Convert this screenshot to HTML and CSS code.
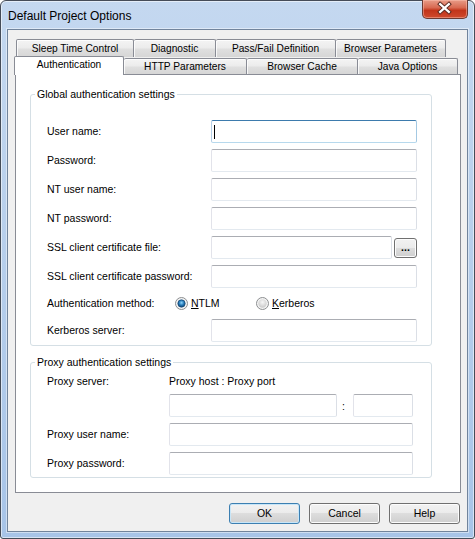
FILE: index.html
```html
<!DOCTYPE html>
<html>
<head>
<meta charset="utf-8">
<title>Default Project Options</title>
<link rel="stylesheet" href="styles.css">
</head>
<body>
<div class="window">
  <div class="titlebar">
    <span class="title">Default Project Options</span>
    <div class="close">
      <svg width="46" height="19" viewBox="0 0 46 19">
        <path d="M18.5 5 L27.5 13 M27.5 5 L18.5 13" stroke="#5a2a22" stroke-width="4.2" stroke-linecap="square" fill="none"/>
        <path d="M18.5 5 L27.5 13 M27.5 5 L18.5 13" stroke="#ffffff" stroke-width="2.2" stroke-linecap="square" fill="none"/>
      </svg>
    </div>
  </div>
  <div class="client">
    <div class="tabs">
      <div class="tabrow back">
        <div class="tab first t1">Sleep Time Control</div>
        <div class="tab t2">Diagnostic</div>
        <div class="tab t3">Pass/Fail Definition</div>
        <div class="tab t4">Browser Parameters</div>
      </div>
      <div class="tabrow front">
        <div class="tab selected u1">Authentication</div>
        <div class="tab u2">HTTP Parameters</div>
        <div class="tab u3">Browser Cache</div>
        <div class="tab u4">Java Options</div>
      </div>
    </div>
    <div class="panel">
      <fieldset class="group g1">
        <legend>Global authentication settings</legend>
        <div class="form form1">
          <span class="lbl">User name:</span>
          <div class="field focus"><span class="caret"></span></div>
          <span class="lbl">Password:</span>
          <div class="field"></div>
          <span class="lbl">NT user name:</span>
          <div class="field"></div>
          <span class="lbl">NT password:</span>
          <div class="field"></div>
          <span class="lbl">SSL client certificate file:</span>
          <div class="filepick">
            <div class="field file"></div>
            <div class="btn browse">...</div>
          </div>
          <span class="lbl">SSL client certificate password:</span>
          <div class="field"></div>
          <div class="radiorow">
            <span class="lbl method">Authentication method:</span>
            <span class="radio r-ntlm">
              <svg width="13" height="13" viewBox="0 0 13 13">
                <defs>
                  <radialGradient id="rb" cx="50%" cy="40%" r="60%">
                    <stop offset="0" stop-color="#8fd6fb"/>
                    <stop offset="0.55" stop-color="#2479b8"/>
                    <stop offset="1" stop-color="#10416d"/>
                  </radialGradient>
                </defs>
                <circle cx="6.5" cy="6.5" r="6" fill="#f4f4f4" stroke="#8c8e90"/>
                <circle cx="6.5" cy="6.5" r="3.7" fill="url(#rb)" stroke="#1b4a74" stroke-width="0.7"/>
              </svg>
              <span><u>N</u>TLM</span>
            </span>
            <span class="radio">
              <svg width="13" height="13" viewBox="0 0 13 13">
                <defs>
                  <radialGradient id="rg" cx="50%" cy="35%" r="65%">
                    <stop offset="0" stop-color="#f7f7f7"/>
                    <stop offset="1" stop-color="#c9c9c9"/>
                  </radialGradient>
                </defs>
                <circle cx="6.5" cy="6.5" r="6" fill="#f4f4f4" stroke="#8c8e90"/>
                <circle cx="6.5" cy="6.5" r="4.2" fill="url(#rg)"/>
              </svg>
              <span><u>K</u>erberos</span>
            </span>
          </div>
          <span class="lbl">Kerberos server:</span>
          <div class="field"></div>
        </div>
      </fieldset>
      <fieldset class="group g2">
        <legend>Proxy authentication settings</legend>
        <div class="form form2">
          <span class="lbl">Proxy server:</span>
          <span class="lbl">Proxy host : Proxy port</span>
          <div class="hostport">
            <div class="field host"></div>
            <span class="colon">:</span>
            <div class="field port"></div>
          </div>
          <span class="lbl">Proxy user name:</span>
          <div class="field"></div>
          <span class="lbl">Proxy password:</span>
          <div class="field"></div>
        </div>
      </fieldset>
    </div>
    <div class="buttons">
      <div class="btn push default">OK</div>
      <div class="btn push">Cancel</div>
      <div class="btn push">Help</div>
    </div>
  </div>
</div>
</body>
</html>
```

FILE: styles.css
```css
html, body {
  margin: 0;
  padding: 0;
  background: #ffffff;
}

body {
  font-family: "Liberation Sans", Arial, sans-serif;
  font-size: 10.5px;
  color: #000;
}

.window {
  box-sizing: border-box;
  width: 475px;
  height: 539px;
  border: 1px solid #454c58;
  border-radius: 6px 6px 3px 3px;
  background: linear-gradient(to bottom, #c4d8f0 0%, #b9d0ec 40%, #a7c4e8 100%);
  padding: 0 6px 6px 6px;
  display: flex;
  flex-direction: column;
  box-shadow: inset 0 0 0 1px rgba(255, 255, 255, 0.55);
}

.titlebar {
  height: 28px;
  display: flex;
  align-items: center;
}

.title {
  font-family: "Liberation Sans", Arial, sans-serif;
  font-size: 12px;
  padding-left: 1px;
  color: #000;
  line-height: 14px;
  margin-top: 1px;
}

.close {
  margin-left: auto;
  align-self: flex-start;
  margin-top: -1px;
  width: 46px;
  height: 19px;
  box-sizing: border-box;
  border: 1px solid #6b3a33;
  border-top: none;
  border-radius: 0 0 5px 5px;
  background: linear-gradient(to bottom, #e89c88 0%, #d86a52 42%, #c2341a 58%, #cf4a2e 100%);
  box-shadow: inset 0 0 0 1px rgba(255, 200, 185, 0.45);
  display: flex;
}

.close svg {
  display: block;
  margin: -1px 0 0 -1px;
}

.client {
  flex: 1;
  border: 1px solid #71849c;
  background: #f0f0f0;
  padding: 9px 6px 0 7px;
  box-shadow: 0 0 0 1px rgba(255, 255, 255, 0.45);
}

/* Tabs */
.tabs {
  width: 446px;
}

.tabrow {
  display: flex;
  align-items: flex-end;
}

.tabrow.back {
  height: 18px;
  padding-left: 1px;
}

.tabrow.front {
  height: 17px;
}

.tab {
  box-sizing: border-box;
  border-top: 1px solid #898c95;
  border-right: 1px solid #898c95;
  border-radius: 2px 2px 0 0;
  background: linear-gradient(to bottom, #f4f4f4 0%, #ececec 45%, #dfdfdf 55%, #d6d6d6 100%);
  box-shadow: inset 1px 1px 0 rgba(255, 255, 255, 0.8);
  display: flex;
  align-items: center;
  justify-content: center;
  font-size: 10.2px;
  line-height: 12px;
  white-space: nowrap;
}

.tab.first {
  border-left: 1px solid #898c95;
}

.tabrow.back .tab {
  height: 18px;
}

.tabrow.front .tab {
  height: 16px;
}

.tabrow.front .tab.selected {
  height: 19px;
  margin-left: -1px;
  margin-bottom: -1px;
  border-left: 1px solid #898c95;
  background: #ffffff;
  box-shadow: none;
  position: relative;
  z-index: 1;
  padding-bottom: 2px;
}

.t1 { width: 118px; }
.t2 { width: 82px; }
.t3 { width: 120px; }
.t4 { width: 110px; }
.u1 { width: 110px; }
.u2 { width: 123px; }
.u3 { width: 111px; }
.u4 { width: 100px; }

/* Panel */
.panel {
  box-sizing: border-box;
  width: 446px;
  height: 419px;
  border: 1px solid #898c95;
  background: #ffffff;
}

.group {
  box-sizing: border-box;
  width: 402px;
  margin: 0 0 0 14px;
  padding: 0;
  border: 1px solid #d5dfe5;
  border-radius: 3px;
  min-inline-size: 0;
}

.g1 {
  margin-top: 13px;
}

.g2 {
  margin-top: 10px;
}

.group legend {
  margin-left: 4px;
  padding: 0 2px;
  line-height: 13px;
  font-size: 10.5px;
  color: #000;
}

.form {
  display: grid;
  align-items: center;
  padding-left: 16px;
}

.form1 {
  grid-template-columns: 164px 206px;
  grid-template-rows: 23px 23px 23px 23px 23px 23px 19px 23px;
  row-gap: 6px;
  padding-top: 19px;
  padding-bottom: 3px;
}

.form2 {
  grid-template-columns: 122px 244px;
  grid-template-rows: 14px 23px 23px 23px;
  row-gap: 6px;
  padding-top: 5px;
  padding-bottom: 2px;
}

.lbl {
  line-height: 13px;
  white-space: nowrap;
}

.field {
  box-sizing: border-box;
  height: 23px;
  background: #ffffff;
  border: 1px solid;
  border-color: #abadb3 #dbdfe6 #e3e9ef #e2e3ea;
  border-radius: 2px;
  display: flex;
  align-items: center;
}

.field.focus {
  border-color: #3d7bad #a4c9e3 #b7d9ed #b5cfe7;
}

.caret {
  display: block;
  width: 1px;
  height: 14px;
  margin-left: 2px;
  background: #000;
}

.filepick {
  display: flex;
  align-items: center;
  gap: 2px;
}

.field.file {
  width: 181px;
}

.btn {
  box-sizing: border-box;
  border: 1px solid #707070;
  border-radius: 3px;
  background: linear-gradient(to bottom, #f2f2f2 0%, #ebebeb 50%, #dddddd 50%, #cfcfcf 100%);
  box-shadow: inset 0 0 0 1px #fcfcfc;
  display: flex;
  align-items: center;
  justify-content: center;
  white-space: nowrap;
}

.browse {
  width: 23px;
  height: 20px;
  font-weight: bold;
  font-size: 10.5px;
  line-height: 12px;
  padding-bottom: 1px;
}

.radiorow {
  grid-column: 1 / -1;
  display: flex;
  align-items: center;
  height: 19px;
}

.lbl.method {
  width: 128px;
}

.radio {
  display: flex;
  align-items: center;
  gap: 3px;
  line-height: 13px;
}

.radio svg {
  display: block;
}

.r-ntlm {
  width: 81px;
}

.radio u {
  text-decoration: underline;
  text-underline-offset: 1px;
}

.hostport {
  grid-column: 2;
  display: flex;
  align-items: center;
}

.field.host {
  width: 168px;
}

.colon {
  box-sizing: border-box;
  width: 16px;
  padding-left: 5px;
}

.field.port {
  width: 60px;
}

/* Bottom buttons */
.buttons {
  display: flex;
  justify-content: flex-end;
  gap: 9px;
  margin-top: 10px;
  padding-right: 1px;
}

.push {
  width: 71px;
  height: 21px;
  font-size: 10.5px;
  line-height: 13px;
}

.push.default {
  border-color: #3c7fb1;
  box-shadow: inset 0 0 0 1px #c8e6f8;
}
```
